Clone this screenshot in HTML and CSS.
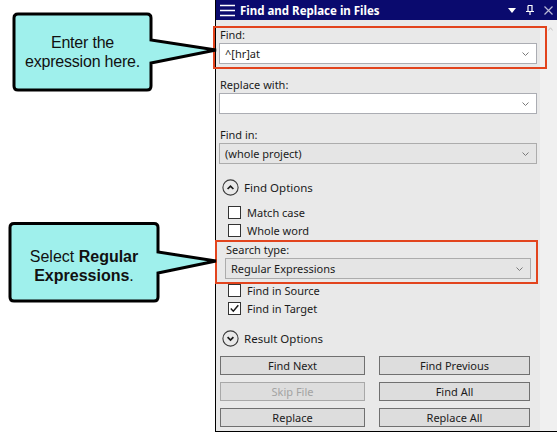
FILE: index.html
```html
<!DOCTYPE html>
<html>
<head>
<meta charset="utf-8">
<title>Find and Replace in Files</title>
<link rel="stylesheet" href="styles.css">
</head>
<body>
<div class="stage">
  <div class="gutter"></div>
  <section class="panel">
    <header class="titlebar">
      <svg class="menu-icon" width="16" height="14" viewBox="0 0 16 14"><path d="M0 1.5H15M0 6.5H15M0 11.5H15" stroke="#fff" stroke-width="1.4" fill="none"/></svg>
      <span class="title">Find and Replace in Files</span>
      <span class="title-actions">
        <svg class="tb-icon" width="8" height="5" viewBox="0 0 8 5"><path d="M0 0H8L4 5Z" fill="#fff"/></svg>
        <svg class="tb-icon pin" width="8" height="10" viewBox="0 0 8 10"><path d="M2 0.5H6V6.5M2 0.5V6.5M0 6.5H8M4 6.5V10" stroke="#fff" stroke-width="1.2" fill="none"/></svg>
        <svg class="tb-icon close" width="9" height="9" viewBox="0 0 9 9"><path d="M0.5 0.5L8.5 8.5M8.5 0.5L0.5 8.5" stroke="#b9b9d6" stroke-width="1.2" fill="none"/></svg>
      </span>
    </header>
    <div class="panel-body">
      <div class="content">
        <div class="field hl hl-find">
          <div class="label">Find:</div>
          <div class="combo edit"><span class="value">^[hr]at</span><svg class="chev" width="7" height="4" viewBox="0 0 7 4"><path d="M0.5 0.5L3.5 3.5L6.5 0.5" stroke="#7a7a7a" fill="none"/></svg></div>
        </div>
        <div class="field gap13">
          <div class="label">Replace with:</div>
          <div class="combo edit"><span class="value"></span><svg class="chev" width="7" height="4" viewBox="0 0 7 4"><path d="M0.5 0.5L3.5 3.5L6.5 0.5" stroke="#7a7a7a" fill="none"/></svg></div>
        </div>
        <div class="field gap13">
          <div class="label">Find in:</div>
          <div class="combo drop"><span class="value">(whole project)</span><svg class="chev" width="7" height="4" viewBox="0 0 7 4"><path d="M0.5 0.5L3.5 3.5L6.5 0.5" stroke="#7a7a7a" fill="none"/></svg></div>
        </div>

        <div class="expander find-options">
          <svg class="circ" width="17" height="17" viewBox="0 0 17 17"><circle cx="8.5" cy="8.5" r="7.6" stroke="#3a3a3a" stroke-width="1.1" fill="none"/><path d="M5.6 10L8.5 7.1L11.4 10" stroke="#1a1a1a" stroke-width="1.7" fill="none"/></svg>
          <span>Find Options</span>
        </div>

        <div class="options">
          <div class="check"><span class="box"></span><span>Match case</span></div>
          <div class="check"><span class="box"></span><span>Whole word</span></div>
          <div class="field hl hl-search">
            <div class="label">Search type:</div>
            <div class="combo drop"><span class="value">Regular Expressions</span><svg class="chev" width="7" height="4" viewBox="0 0 7 4"><path d="M0.5 0.5L3.5 3.5L6.5 0.5" stroke="#7a7a7a" fill="none"/></svg></div>
          </div>
          <div class="check src"><span class="box"></span><span>Find in Source</span></div>
          <div class="check"><span class="box"><svg width="11" height="11" viewBox="0 0 11 11"><path d="M1.8 5.6L4.3 8.2L9.3 2.2" stroke="#1a1a1a" stroke-width="1.5" fill="none"/></svg></span><span>Find in Target</span></div>
        </div>

        <div class="expander result-options">
          <svg class="circ" width="17" height="17" viewBox="0 0 17 17"><circle cx="8.5" cy="8.5" r="7.6" stroke="#3a3a3a" stroke-width="1.1" fill="none"/><path d="M5.6 7.2L8.5 10.1L11.4 7.2" stroke="#1a1a1a" stroke-width="1.7" fill="none"/></svg>
          <span>Result Options</span>
        </div>

        <div class="buttons">
          <button class="btn">Find Next</button>
          <button class="btn">Find Previous</button>
          <button class="btn" disabled>Skip File</button>
          <button class="btn">Find All</button>
          <button class="btn">Replace</button>
          <button class="btn">Replace All</button>
        </div>
      </div>
      <div class="scrollbar">
        <svg class="scroll-up" width="5" height="4" viewBox="0 0 5 4"><path d="M0.3 3.5L2.5 0.8L4.7 3.5" stroke="#c4c4c4" fill="none"/></svg>
      </div>
    </div>
  </section>
</div>

<div class="callout callout-1">
  <svg class="callout-shape" width="222" height="100" viewBox="0 0 222 100"><path d="M18 14H147Q151 14 151 18V40L216 50L151 63V86Q151 90 147 90H18Q14 90 14 86V18Q14 14 18 14Z" fill="#9ff0ec" stroke="#000" stroke-width="3" stroke-linejoin="miter"/></svg>
  <div class="callout-text t1"><p>Enter the<br>expression here.</p></div>
</div>
<div class="callout callout-2">
  <svg class="callout-shape" width="222" height="90" viewBox="0 0 222 90"><path d="M14 1.5H154Q158 1.5 158 5.5V30L216 39L158 51V75Q158 79 154 79H14Q10 79 10 75V5.5Q10 1.5 14 1.5Z" fill="#9ff0ec" stroke="#000" stroke-width="3" stroke-linejoin="miter"/></svg>
  <div class="callout-text t2"><p>Select <b>Regular</b><br><b>Expressions</b>.</p></div>
</div>
</body>
</html>
```

FILE: styles.css
```css
* { box-sizing: border-box; }

html, body {
  margin: 0;
  padding: 0;
  background: #ffffff;
}

body {
  position: relative;
  width: 557px;
  height: 441px;
  overflow: hidden;
  font-family: "Noto Sans", "Open Sans", sans-serif;
  font-size: 11px;
  color: #1b1b1b;
}

.stage {
  display: flex;
  align-items: flex-start;
}

.gutter {
  width: 215px;
  flex: none;
}

.panel {
  width: 342px;
  height: 432px;
  flex: none;
  display: flex;
  flex-direction: column;
  border-left: 1px solid #000;
  border-bottom: 1px solid #000;
  background: #e9e9e9;
}

.titlebar {
  height: 20px;
  flex: none;
  display: flex;
  align-items: center;
  background: #0a0a6e;
  color: #fff;
  padding-left: 4px;
}

.menu-icon { display: block; margin-top: 1px; }

.title {
  margin-left: 4px;
  font-weight: 700;
  font-size: 11.5px;
}

.title-actions {
  margin-left: auto;
  display: flex;
  align-items: center;
  padding-right: 4px;
}

.tb-icon { display: block; }
.pin { margin-left: 10px; margin-top: -1px; }
.close { margin-left: 10px; }

.panel-body {
  flex: 1;
  display: flex;
}

.content {
  flex: 1;
  padding: 7px 3px 0 3px;
  display: flex;
  flex-direction: column;
}

.scrollbar {
  width: 17px;
  flex: none;
  background: #f0f0f0;
  display: flex;
  justify-content: center;
  padding-top: 7px;
  padding-left: 3px;
}
.scroll-up { display: block; }

.field { display: flex; flex-direction: column; }
.gap13 { margin-top: 13px; }

.label {
  height: 16px;
  line-height: 16px;
  padding-left: 1px;
}

.combo {
  height: 21px;
  display: flex;
  align-items: center;
  border: 1px solid #abadb3;
  padding: 0 7px 0 5px;
}
.combo.edit { background: #ffffff; }
.combo.drop { background: #e5e5e5; border-color: #acacac; }
.combo .value { flex: 1; white-space: nowrap; }
.chev { display: block; flex: none; margin-top: 1px; }

.hl { position: relative; }
.hl::before {
  content: "";
  position: absolute;
  border: 2px solid #e2441d;
  pointer-events: none;
}
.hl-find::before { top: -1px; left: -6px; right: -10px; bottom: -5px; }

.expander {
  height: 18px;
  display: flex;
  align-items: center;
  padding-left: 3px;
  font-size: 11.5px;
}
.expander .circ { display: block; margin-right: 5px; }
.find-options { margin-top: 14px; }
.result-options { margin-top: 12px; }

.options {
  display: flex;
  flex-direction: column;
  margin-top: 7px;
}

.check {
  height: 18px;
  display: flex;
  align-items: center;
  padding-left: 9px;
}
.check .box {
  width: 13px;
  height: 13px;
  border: 1px solid #333;
  background: #fff;
  margin-right: 6px;
  display: flex;
  align-items: center;
  justify-content: center;
}
.check .box svg { display: block; }
.check.src { margin-top: 2px; }

.hl-search { margin: 3px 6px 0 6px; }
.hl-search .label { padding-left: 1px; }
.hl-search::before { top: -2px; left: -10px; right: -7px; bottom: -5px; }

.buttons {
  display: grid;
  grid-template-columns: 145px 151px;
  column-gap: 14px;
  row-gap: 7px;
  margin-top: 9px;
  padding-left: 1px;
}

.btn {
  height: 19px;
  font-family: inherit;
  font-size: 11px;
  color: #1b1b1b;
  background: #dddddd;
  border: 1px solid #707070;
  border-radius: 0;
  padding: 0;
  line-height: 17px;
}
.btn:disabled { color: #a3a3a3; border-color: #a8a8a8; }

.callout {
  position: absolute;
  left: 0;
}
.callout-1 { top: 0; width: 222px; height: 100px; }
.callout-2 { top: 222px; width: 222px; height: 90px; }

.callout-shape { position: absolute; left: 0; top: 0; display: block; }

.callout-text {
  position: absolute;
  display: flex;
  align-items: center;
  justify-content: center;
  text-align: center;
  font-family: "Liberation Sans", Arial, sans-serif;
  font-size: 16px;
  line-height: 19px;
  color: #111;
}
.callout-text p { margin: 0; }
.t1 { left: 14px; top: 14px; width: 137px; height: 76px; letter-spacing: -0.2px; }
.t2 { left: 10px; top: 2px; width: 148px; height: 77px; padding-top: 6px; }
```
